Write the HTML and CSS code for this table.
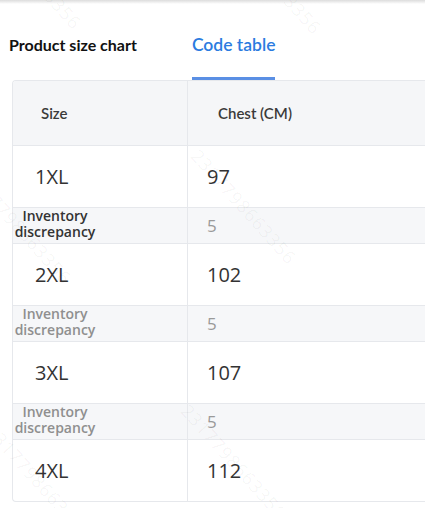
FILE: index.html
```html
<!DOCTYPE html>
<html lang="en">
<head>
    <meta charset="UTF-8">
    <meta name="viewport" content="width=device-width, initial-scale=1.0">
    <title>Product size chart</title>
    <link rel="stylesheet" href="styles.css">
</head>
<body>
    <div class="page">
        <div class="topbar"></div>
        <nav class="tabs">
            <div class="tab">Product size chart</div>
            <div class="tab active">Code table</div>
        </nav>
        <div class="chart">
            <table>
                <thead>
                    <tr>
                        <th class="size">Size</th>
                        <th class="chest">Chest (CM)</th>
                    </tr>
                </thead>
                <tbody>
                    <tr class="main">
                        <td class="size">1XL</td>
                        <td class="chest">97</td>
                    </tr>
                    <tr class="stock">
                        <td class="size"><span class="label dark">Inventory discrepancy</span></td>
                        <td class="chest">5</td>
                    </tr>
                    <tr class="main">
                        <td class="size">2XL</td>
                        <td class="chest">102</td>
                    </tr>
                    <tr class="stock">
                        <td class="size"><span class="label">Inventory discrepancy</span></td>
                        <td class="chest">5</td>
                    </tr>
                    <tr class="main">
                        <td class="size">3XL</td>
                        <td class="chest">107</td>
                    </tr>
                    <tr class="stock">
                        <td class="size"><span class="label">Inventory discrepancy</span></td>
                        <td class="chest">5</td>
                    </tr>
                    <tr class="main">
                        <td class="size">4XL</td>
                        <td class="chest">112</td>
                    </tr>
                </tbody>
            </table>
        </div>

        <!-- watermark -->
        <span class="mark m1">2317798663356</span>
        <span class="mark m2">2317798663356</span>
        <span class="mark m3">2317798663356</span>
        <span class="mark m4">2317798663356</span>
        <span class="mark m5">2317798663356</span>
        <span class="mark m6">2317798663356</span>
    </div>
</body>
</html>
```

FILE: styles.css
```css
body {
    margin: 0;
    background-color: #fff;
    font-family: Lato, "Open Sans", sans-serif;
    color: #333;
    overflow: hidden;
}

.page {
    position: relative;
    height: 508px;
    overflow: hidden;
}

.topbar {
    height: 4px;
    background: linear-gradient(#dcdcdc, #fff);
}

.tabs {
    display: flex;
    padding-left: 9px;
    gap: 55px;
}

.tab {
    padding: 31px 0 22px;
    line-height: 20px;
    font-size: 16px;
    font-weight: 700;
    color: #111;
    border-bottom: 3px solid transparent;
}

.tab.active {
    font-size: 17.5px;
    font-weight: 600;
    color: #2b7be0;
    border-bottom-color: #5a8fe4;
}

.chart {
    margin-left: 12px;
    border: 1px solid #e6e8ec;
    border-right: none;
    border-radius: 4px 0 0 4px;
    overflow: hidden;
}

table {
    width: 100%;
    border-collapse: collapse;
}

th, td {
    text-align: left;
    vertical-align: middle;
    padding: 0;
}

td + td, th + th {
    border-left: 1px solid #e6e8ec;
}

thead tr {
    height: 64px;
    background-color: #f5f6f8;
}

th {
    font-size: 15px;
    font-weight: 600;
    color: #3a3a3a;
}

th.size {
    width: 146px;
    padding-left: 28px;
}

th.chest {
    padding-left: 30px;
}

tbody tr {
    border-top: 1px solid #e6e8ec;
}

tr.main {
    height: 62px;
    font-family: "Open Sans", sans-serif;
    font-size: 20px;
    color: #333;
}

tr.main td.size {
    padding-left: 22px;
}

td.chest {
    padding-left: 19px;
}

tr.stock {
    height: 36px;
    background-color: #f6f7f9;
    font-family: "Open Sans", sans-serif;
}

tr.stock td.chest {
    font-size: 17px;
    color: #9a9a9a;
}

.label {
    display: inline-block;
    width: 84px;
    text-align: center;
    font-size: 14px;
    line-height: 16px;
    color: #8f8f8f;
    font-weight: 600;
}

.label.dark {
    color: #333;
}

.mark {
    position: absolute;
    font-family: "Open Sans", sans-serif;
    font-size: 18px;
    letter-spacing: 1px;
    color: rgba(0, 0, 0, 0.045);
    transform: rotate(48deg);
    transform-origin: left center;
    white-space: nowrap;
    pointer-events: none;
}

.m1 { left: -20px; top: -95px; }
.m2 { left: 220px; top: -90px; }
.m3 { left: 195px; top: 140px; }
.m4 { left: -30px; top: 160px; }
.m5 { left: 185px; top: 395px; }
.m6 { left: -10px; top: 415px; }
```
